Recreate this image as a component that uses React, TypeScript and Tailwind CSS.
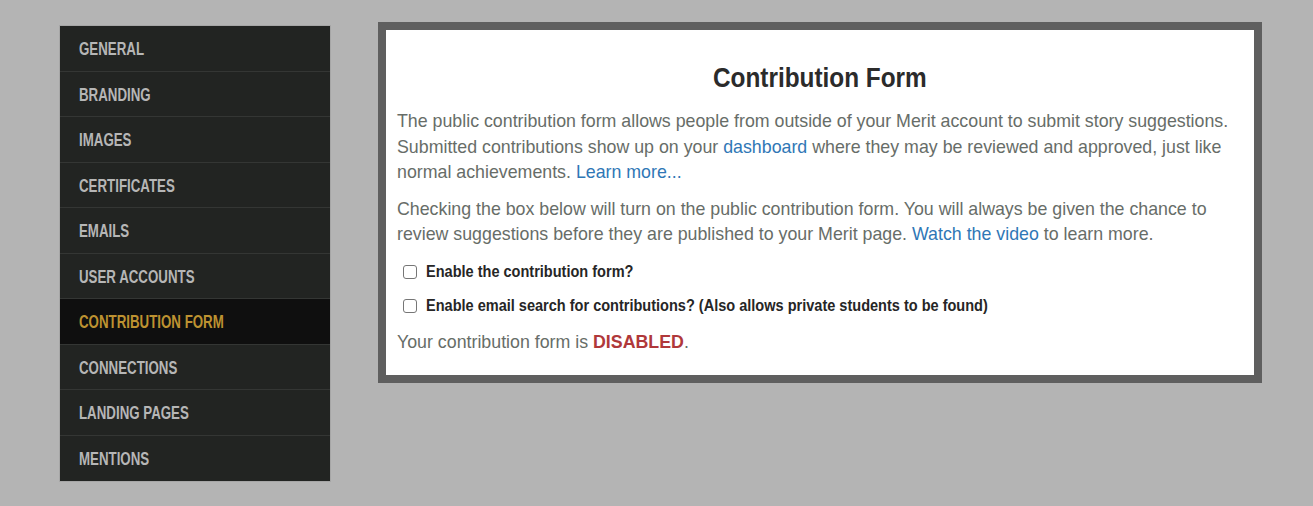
import React from "react";

const items = [
  "GENERAL",
  "BRANDING",
  "IMAGES",
  "CERTIFICATES",
  "EMAILS",
  "USER ACCOUNTS",
  "CONTRIBUTION FORM",
  "CONNECTIONS",
  "LANDING PAGES",
  "MENTIONS",
];

const sans = { fontFamily: '"Liberation Sans", Arial, Helvetica, sans-serif' };

export default function App() {
  return (
    <div style={sans} className="w-[1313px] h-[506px] bg-[#b4b4b4] flex items-start overflow-hidden">
      <nav className="ml-[59px] mt-[25px] w-[272px] border border-[#a6a6a6] bg-[#222422] flex flex-col">
        {items.map((it) => {
          const active = it === "CONTRIBUTION FORM";
          return (
            <div
              key={it}
              className={`h-[45.5px] flex items-center pl-[19px] border-b border-[#343634] last:border-b-0 ${
                active ? "bg-[#0f0f0f] text-[#bd9231]" : "text-[#b6b6b6]"
              }`}
            >
              <span className="inline-block whitespace-nowrap origin-left scale-x-[0.76] text-[17.5px] font-bold translate-y-[1px]">
                {it}
              </span>
            </div>
          );
        })}
      </nav>
      <main className="ml-[47px] mt-[22px] w-[884px] border-[8px] border-[#5f5f5f] bg-white px-[11px] pt-[32px] pb-[20px]">
        <h1 className="text-center text-[28px] leading-[32px] font-bold text-[#2b2b2b]">
          <span className="inline-block scale-x-[0.87]">Contribution Form</span>
        </h1>
        <p className="mt-[15px] text-[17.8px] leading-[25.5px] text-[#676d68]">
          The public contribution form allows people from outside of your Merit account to submit story suggestions.
          Submitted contributions show up on your <a className="text-[#2f77b6]">dashboard</a> where they may be reviewed
          and approved, just like normal achievements. <a className="text-[#2f77b6]">Learn more...</a>
        </p>
        <p className="mt-[11px] text-[17.8px] leading-[25.5px] text-[#676d68]">
          Checking the box below will turn on the public contribution form. You will always be given the chance to
          review suggestions before they are published to your Merit page.{" "}
          <a className="text-[#2f77b6]">Watch the video</a> to learn more.
        </p>
        <div className="mt-[14px] flex flex-col gap-[14px]">
          {[
            "Enable the contribution form?",
            "Enable email search for contributions? (Also allows private students to be found)",
          ].map((l) => (
            <label key={l} className="flex items-center h-[20px]">
              <span className="ml-[6px] w-[14px] h-[14px] rounded-[3px] border border-[#767676] bg-white shrink-0" />
              <span className="ml-[9px] inline-block whitespace-nowrap origin-left scale-x-[0.908] text-[16px] font-bold text-[#262626]">
                {l}
              </span>
            </label>
          ))}
        </div>
        <p className="mt-[14px] text-[17.8px] leading-[25px] text-[#676d68]">
          Your contribution form is <span className="font-bold text-[#b0383a]">DISABLED</span>.
        </p>
      </main>
    </div>
  );
}
